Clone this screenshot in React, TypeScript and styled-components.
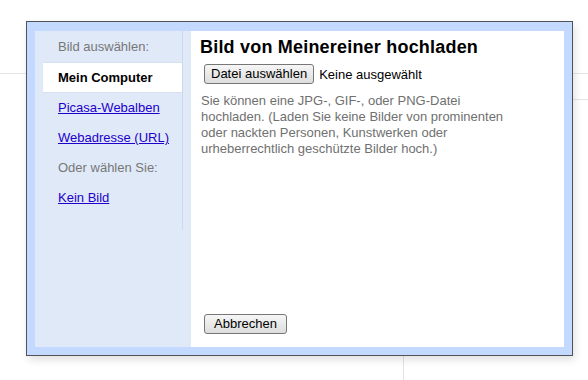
import React from "react";
import styled, {createGlobalStyle} from "styled-components";

const GlobalStyle = createGlobalStyle`
  html, body {
    margin: 0;
    padding: 0;
    background: #ffffff;
  }
  body {
    font-family: "Liberation Sans", Arial, sans-serif;
    font-size: 13px;
  }
`;

const Page = styled.div`
  position: relative;
  width: 588px;
  height: 380px;
  overflow: hidden;
  background-color: #ffffff;
  background-image: linear-gradient(#e6e6e6, #e6e6e6),
    linear-gradient(#e6e6e6, #e6e6e6), linear-gradient(#e2e2e2, #e2e2e2);
  background-repeat: no-repeat;
  background-size: 100% 1px, 60px 1px, 1px 40px;
  background-position: 0 73px, 540px 99px, 403px 350px;
`;

const Dialog = styled.div`
  position: absolute;
  left: 26px;
  top: 21px;
  width: 529px;
  height: 316px;
  padding: 9px 8px 8px 8px;
  background: #c3d9ff;
  border: 1px solid #4f5358;
  box-shadow: 2px 4px 8px rgba(0, 0, 0, 0.12);
  display: flex;
`;

const Sidebar = styled.div`
  width: 156px;
  background: #e0e9f8;
  flex-shrink: 0;
`;

const NavList = styled.ul`
  list-style: none;
  margin: 0;
  padding: 1px 0 17px 8px;
  width: 139px;
  border-right: 1px solid #cdd8ea;
`;

const NavItem = styled.li<{$selected?: boolean; $label?: boolean}>`
  box-sizing: border-box;
  height: ${(p) => (p.$selected ? "31px" : "30px")};
  line-height: ${(p) => (p.$selected ? "29px" : "30px")};
  padding-left: 15px;
  color: ${(p) => (p.$label ? "#777777" : "#000000")};
  font-weight: ${(p) => (p.$selected ? "bold" : "normal")};
  background: ${(p) => (p.$selected ? "#ffffff" : "transparent")};
  border-top: ${(p) => (p.$selected ? "1px solid #d6e0f0" : "none")};
  border-bottom: ${(p) => (p.$selected ? "1px solid #d6e0f0" : "none")};
  white-space: nowrap;
`;

const NavLink = styled.a`
  color: #2200cc;
  text-decoration: underline;
  cursor: pointer;
`;

const Main = styled.div`
  flex: 1;
  background: #ffffff;
  padding: 6px 9px 13px 9px;
  display: flex;
  flex-direction: column;
  align-items: flex-start;
`;

const Title = styled.h2`
  margin: 0;
  font-size: 18px;
  letter-spacing: 0.2px;
  font-weight: bold;
  color: #000000;
  line-height: 20px;
`;

const FileRow = styled.div`
  display: flex;
  align-items: center;
  gap: 5px;
  margin-top: 7px;
  padding-left: 4px;
`;

const Button = styled.button<{$pad?: number}>`
  box-sizing: border-box;
  height: 20px;
  padding: 0 ${(p) => p.$pad ?? 6}px;
  font-family: "Liberation Sans", Arial, sans-serif;
  font-size: 13px;
  color: #000000;
  border: 1px solid #767676;
  border-radius: 3px;
  background: linear-gradient(#f6f6f6, #dddddd);
  line-height: 18px;
  cursor: pointer;
`;

const FileStatus = styled.span`
  color: #000000;
  font-size: 13px;
`;

const Hint = styled.p`
  margin: 9px 0 0 1px;
  width: 310px;
  color: #707070;
  font-size: 13px;
  line-height: 16px;
`;

const Footer = styled.div`
  margin-top: auto;
  padding-left: 4px;
`;

const App: React.FC = () => {
  return (
    <Page>
      <GlobalStyle />
      <Dialog>
        <Sidebar>
          <NavList>
            <NavItem $label>Bild auswählen:</NavItem>
            <NavItem $selected>Mein Computer</NavItem>
            <NavItem>
              <NavLink>Picasa-Webalben</NavLink>
            </NavItem>
            <NavItem>
              <NavLink>Webadresse (URL)</NavLink>
            </NavItem>
            <NavItem $label>Oder wählen Sie:</NavItem>
            <NavItem>
              <NavLink>Kein Bild</NavLink>
            </NavItem>
          </NavList>
        </Sidebar>
        <Main>
          <Title>Bild von Meinereiner hochladen</Title>
          <FileRow>
            <Button>Datei auswählen</Button>
            <FileStatus>Keine ausgewählt</FileStatus>
          </FileRow>
          <Hint>
            Sie können eine JPG-, GIF-, oder PNG-Datei hochladen. (Laden Sie
            keine Bilder von prominenten oder nackten Personen, Kunstwerken
            oder urheberrechtlich geschützte Bilder hoch.)
          </Hint>
          <Footer>
            <Button $pad={9}>Abbrechen</Button>
          </Footer>
        </Main>
      </Dialog>
    </Page>
  );
};

export default App;
